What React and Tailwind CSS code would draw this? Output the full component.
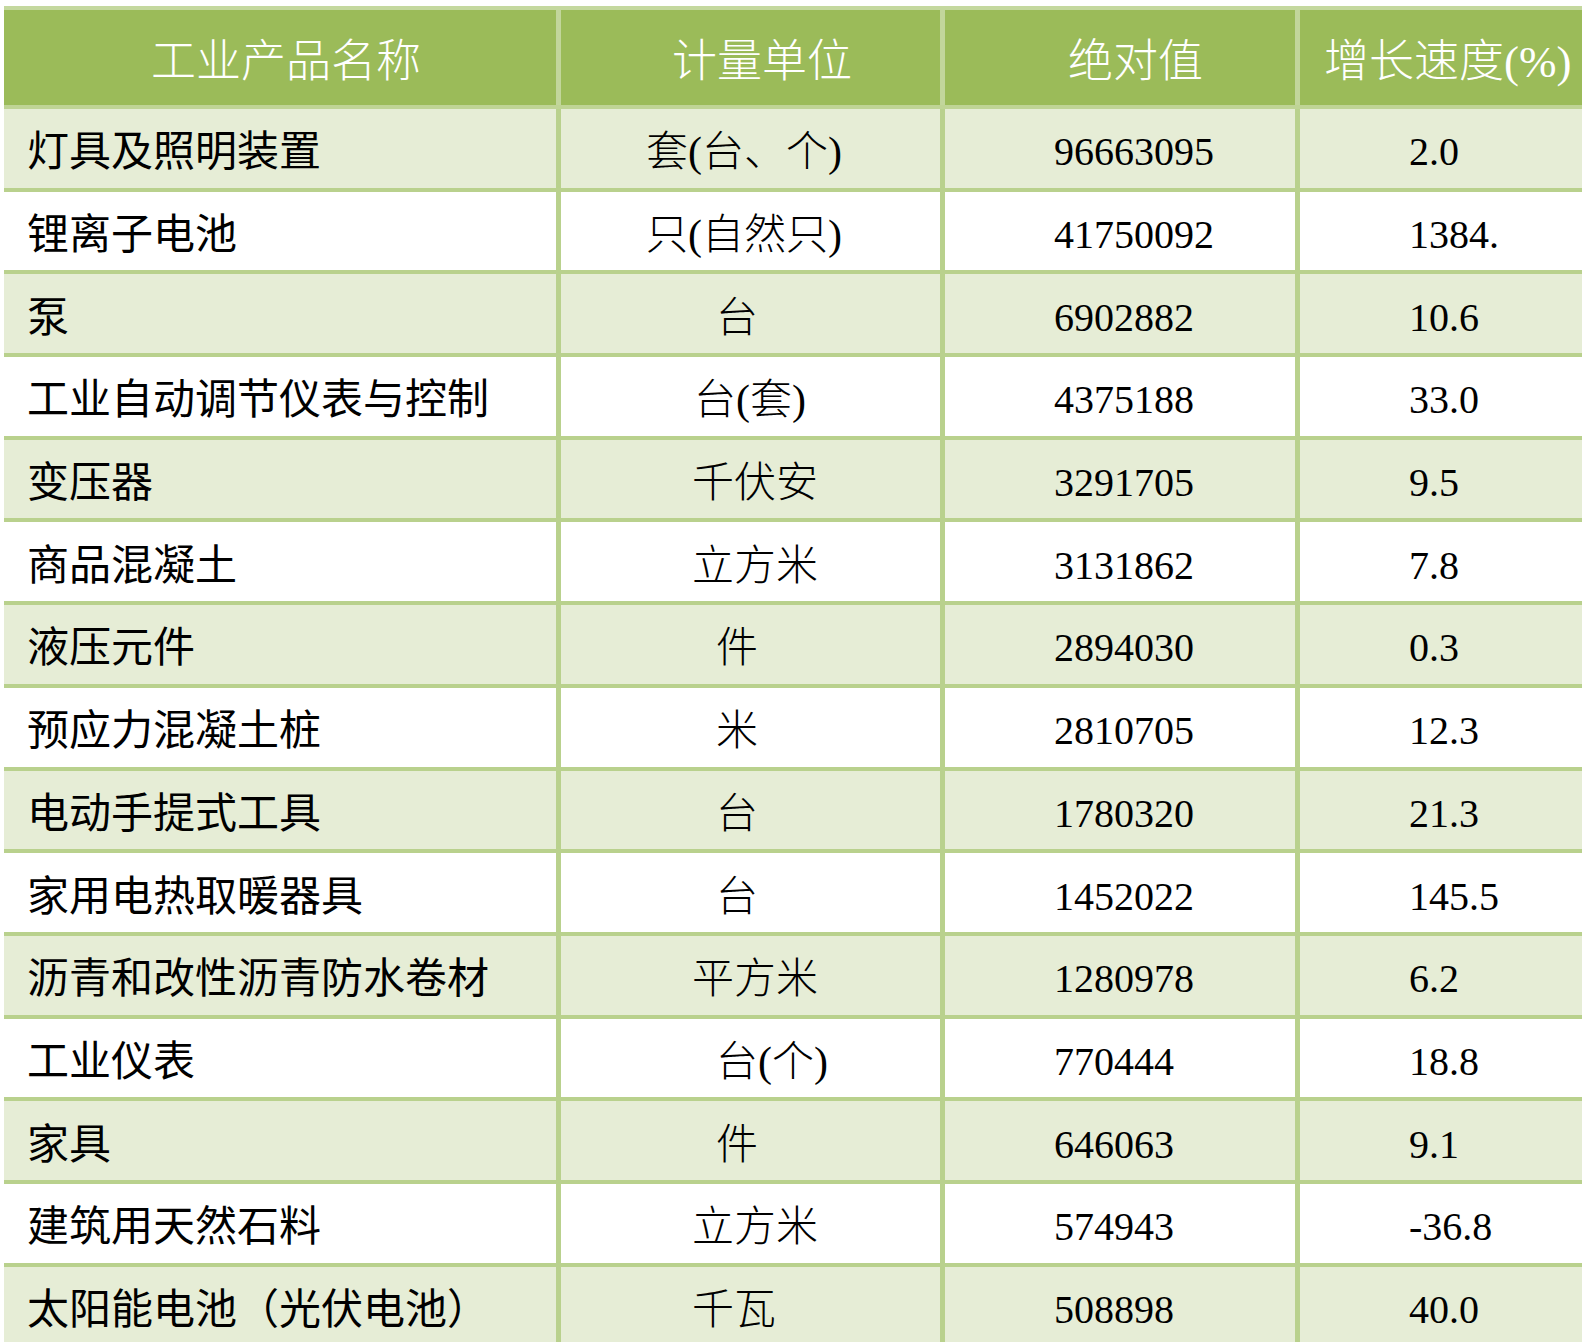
const rows = [
  ['灯具及照明装置', '套(台、个)', 85, '96663095', '2.0'],
  ['锂离子电池', '只(自然只)', 85, '41750092', '1384.'],
  ['泵', '台', 155, '6902882', '10.6'],
  ['工业自动调节仪表与控制', '台(套)', 133, '4375188', '33.0'],
  ['变压器', '千伏安', 131, '3291705', '9.5'],
  ['商品混凝土', '立方米', 131, '3131862', '7.8'],
  ['液压元件', '件', 155, '2894030', '0.3'],
  ['预应力混凝土桩', '米', 155, '2810705', '12.3'],
  ['电动手提式工具', '台', 155, '1780320', '21.3'],
  ['家用电热取暖器具', '台', 155, '1452022', '145.5'],
  ['沥青和改性沥青防水卷材', '平方米', 131, '1280978', '6.2'],
  ['工业仪表', '台(个)', 155, '770444', '18.8'],
  ['家具', '件', 155, '646063', '9.1'],
  ['建筑用天然石料', '立方米', 131, '574943', '-36.8'],
  ['太阳能电池（光伏电池）', '千瓦', 131, '508898', '40.0'],
];

const font = { fontFamily: '"Liberation Serif", "Noto Sans CJK SC", serif' };

export default function App() {
  return (
    <div className="h-[1342px] overflow-hidden bg-white pt-[6px] pl-[4px]" style={font}>
      <div className="border-t-4 border-[#c4d89e]">
        {/* header */}
        <div className="flex h-[99px] border-b-4 border-[#bfd495] bg-[#9bbb59] text-white font-light">
          <div className="flex w-[552px] items-center pl-[147px] pt-[10px] text-[45px] leading-none">工业产品名称</div>
          <div className="flex w-[384px] items-center border-l-[5px] border-[#c2d69b] pl-[111px] pt-[10px] text-[45px] leading-none">计量单位</div>
          <div className="flex w-[355px] items-center border-l-[5px] border-[#c2d69b] pl-[123px] pt-[10px] text-[45px] leading-none">绝对值</div>
          <div className="flex flex-1 items-center border-l-[5px] border-[#c2d69b] pl-[24px] pt-[10px] text-[45px] leading-none">增长速度(%)</div>
        </div>
        {rows.map((r, i) => (
          <div key={i}
            className={`flex h-[82.7px] border-b-4 border-[#b9d18d] text-black ${i % 2 === 0 ? 'bg-[#e6edd6]' : 'bg-white'}`}>
            <div className="flex w-[552px] items-center pl-[23px] pt-[8px] text-[42px] leading-none">{r[0]}</div>
            <div className="flex w-[384px] items-center border-l-[5px] border-[#b9d18d] pt-[8px] text-[42px] leading-none font-light"
              style={{ paddingLeft: r[2] }}>{r[1]}</div>
            <div className="flex w-[355px] items-center border-l-[5px] border-[#b9d18d] pl-[109px] pt-[8px] text-[40px] leading-none">{r[3]}</div>
            <div className="flex flex-1 items-center border-l-[5px] border-[#b9d18d] pl-[109px] pt-[8px] text-[40px] leading-none">{r[4]}</div>
          </div>
        ))}
      </div>
    </div>
  );
}
